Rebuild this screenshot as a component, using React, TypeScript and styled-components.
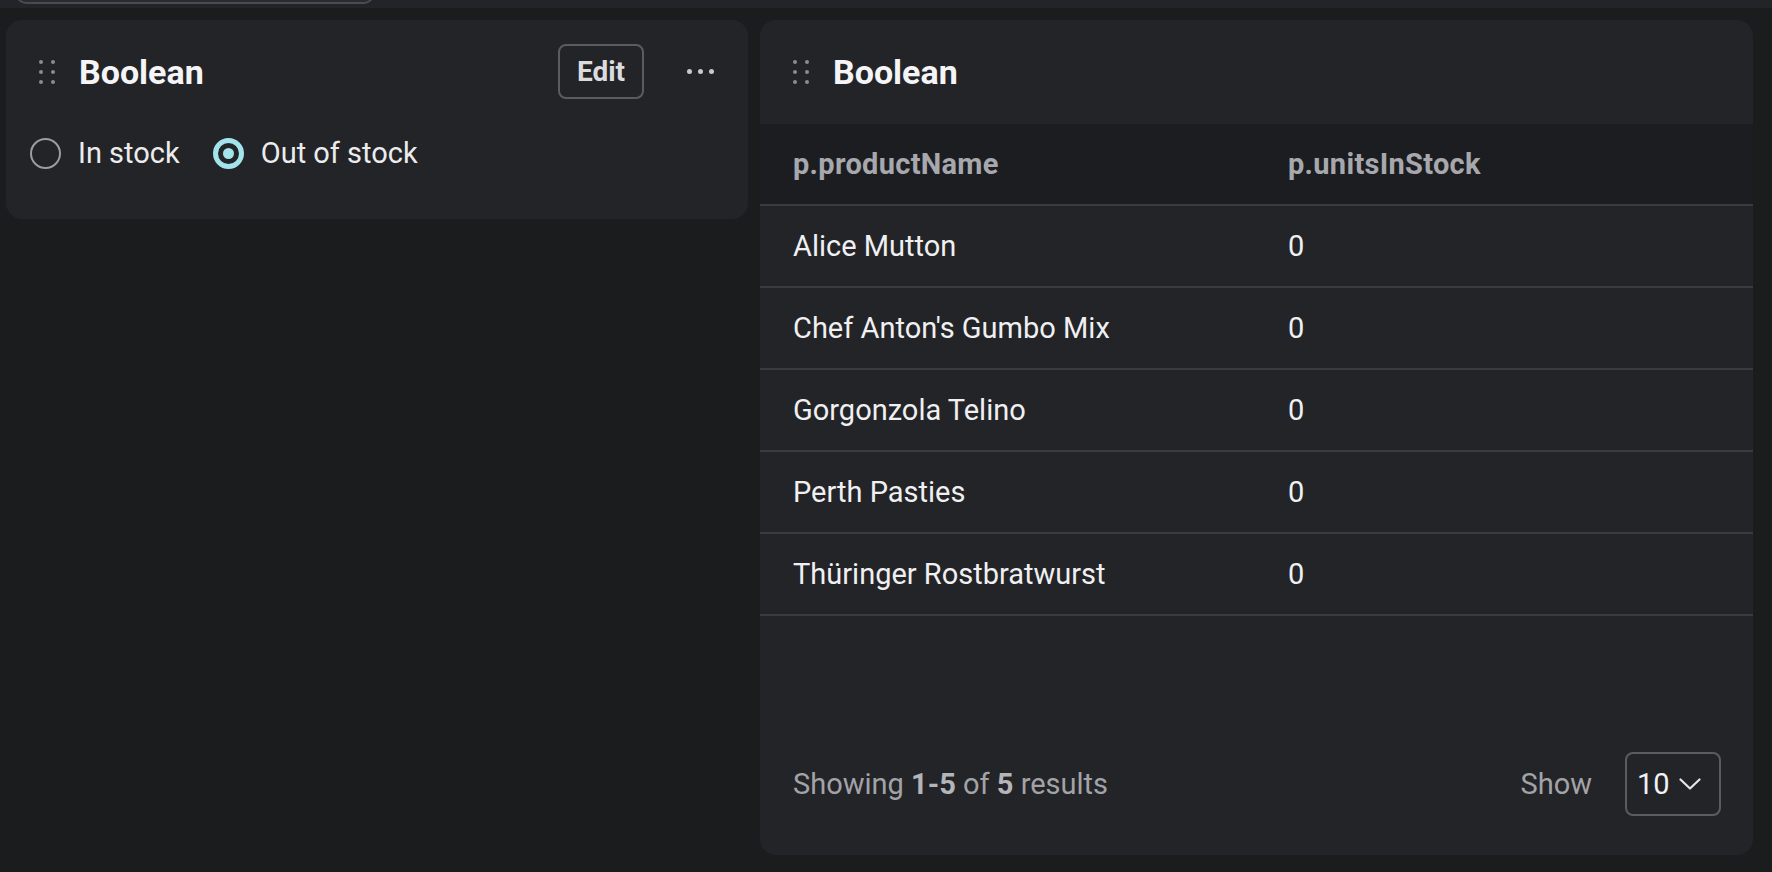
import { FC } from 'react'
import styled, { createGlobalStyle } from 'styled-components'

const GlobalStyle = createGlobalStyle`
    html, body {
        margin: 0;
        padding: 0;
        background: #1b1c1e;
        font-family: Roboto, "Liberation Sans", sans-serif;
        color: #f2f2f4;
    }
    * { box-sizing: border-box; }
`;

const Page = styled.div`
    height: 100vh;
    display: flex;
    flex-direction: column;
`;

const TopBar = styled.div`
    height: 8px;
    flex-shrink: 0;
    background: #232427;
    display: flex;
    align-items: flex-end;
    overflow: hidden;
    padding: 0 0 4px 16px;
`;

const SearchStub = styled.div`
    width: 358px;
    height: 40px;
    flex-shrink: 0;
    background: #2a2b2f;
    border: 2px solid #4a4b50;
    border-radius: 0 0 10px 10px;
`;

const Board = styled.div`
    flex: 1;
    display: grid;
    grid-template-columns: 742px 1fr;
    gap: 12px;
    padding: 12px 19px 17px 6px;
    min-height: 0;
`;

const Card = styled.section<{ $fill?: boolean }>`
    background: #232427;
    border-radius: 16px;
    overflow: hidden;
    align-self: ${p => p.$fill ? 'stretch' : 'start'};
    display: flex;
    flex-direction: column;
`;

const CardHeader = styled.div<{ $tall?: boolean }>`
    display: flex;
    align-items: center;
    height: ${p => p.$tall ? '104px' : '79px'};
    padding: ${p => p.$tall ? '0 32px 0 33px' : '24px 34px 0 33px'};
`;

const Handle = styled.div`
    display: grid;
    grid-template-columns: repeat(2, 4px);
    grid-template-rows: repeat(3, 4px);
    column-gap: 8px;
    row-gap: 6px;
    margin-right: 24px;

    span {
        display: block;
        width: 4px;
        height: 4px;
        border-radius: 50%;
        background: #8b8c91;
    }
`;

const Title = styled.h2`
    margin: 0;
    font-size: 34px;
    font-weight: 700;
    color: #f5f5f7;
    flex: 1;
`;

const EditButton = styled.button`
    height: 55px;
    width: 86px;
    background: transparent;
    border: 2px solid #5b5c61;
    border-radius: 8px;
    color: #dcdcdf;
    font-family: inherit;
    font-size: 28px;
    font-weight: 700;
    padding: 0;
    margin-right: 43px;
`;

const MoreButton = styled.button`
    display: flex;
    gap: 6px;
    background: transparent;
    border: none;
    padding: 0;

    span {
        width: 5px;
        height: 5px;
        border-radius: 50%;
        background: #c9c9cd;
    }
`;

const RadioGroup = styled.div`
    display: flex;
    align-items: center;
    gap: 33px;
    padding: 37px 24px 49px;
`;

const RadioItem = styled.label`
    display: flex;
    align-items: center;
    gap: 17px;
    font-size: 29px;
    color: #ececee;
`;

const RadioDot = styled.span<{ $checked?: boolean }>`
    width: 31px;
    height: 31px;
    border-radius: 50%;
    display: flex;
    align-items: center;
    justify-content: center;
    border: ${p => p.$checked ? '5px solid #a3e3ec' : '2px solid #9c9da2'};

    &::after {
        content: '';
        display: ${p => p.$checked ? 'block' : 'none'};
        width: 11px;
        height: 11px;
        border-radius: 50%;
        background: #a3e3ec;
    }
`;

const Table = styled.div`
    display: flex;
    flex-direction: column;
`;

const Row = styled.div<{ $head?: boolean }>`
    display: grid;
    grid-template-columns: 495px 1fr;
    align-items: center;
    height: 82px;
    padding-left: 33px;
    background: ${p => p.$head ? '#1c1d20' : 'transparent'};
    border-bottom: 2px solid #3a3b40;
    font-size: 29px;
    font-weight: ${p => p.$head ? 700 : 400};
    letter-spacing: ${p => p.$head ? '0.3px' : '0'};
    color: ${p => p.$head ? '#a7a8ae' : '#f0f0f2'};
`;

const Cell = styled.div`
    padding-right: 16px;
`;

const Spacer = styled.div`
    flex: 1;
`;

const Footer = styled.div`
    display: flex;
    align-items: center;
    padding: 0 32px 39px 33px;
    font-size: 29px;
    color: #a2a3a8;

    b {
        font-weight: 700;
        color: #b4b5ba;
    }
`;

const Summary = styled.div`
    flex: 1;
`;

const ShowLabel = styled.span`
    margin-right: 33px;
`;

const PageSize = styled.div`
    width: 96px;
    height: 64px;
    border: 2px solid #5b5c61;
    border-radius: 8px;
    display: flex;
    align-items: center;
    justify-content: space-between;
    padding: 0 18px 0 10px;
    color: #f2f2f4;
`;

const products = [
    'Alice Mutton',
    "Chef Anton's Gumbo Mix",
    'Gorgonzola Telino',
    'Perth Pasties',
    'Thüringer Rostbratwurst',
];

const DragHandle: FC = () => (
    <Handle>
        {[0, 1, 2, 3, 4, 5].map(i => <span key={i} />)}
    </Handle>
);

const App: FC = () => {
    return (
        <Page>
            <GlobalStyle />
            <TopBar>
                <SearchStub />
            </TopBar>
            <Board>
                <Card>
                    <CardHeader>
                        <DragHandle />
                        <Title>Boolean</Title>
                        <EditButton>Edit</EditButton>
                        <MoreButton><span /><span /><span /></MoreButton>
                    </CardHeader>
                    <RadioGroup>
                        <RadioItem><RadioDot />In stock</RadioItem>
                        <RadioItem><RadioDot $checked />Out of stock</RadioItem>
                    </RadioGroup>
                </Card>
                <Card $fill>
                    <CardHeader $tall>
                        <DragHandle />
                        <Title>Boolean</Title>
                    </CardHeader>
                    <Table>
                        <Row $head>
                            <Cell>p.productName</Cell>
                            <Cell>p.unitsInStock</Cell>
                        </Row>
                        {products.map((name, index) =>
                            <Row key={index}>
                                <Cell>{name}</Cell>
                                <Cell>0</Cell>
                            </Row>
                        )}
                    </Table>
                    <Spacer />
                    <Footer>
                        <Summary>Showing <b>1-5</b> of <b>5</b> results</Summary>
                        <ShowLabel>Show</ShowLabel>
                        <PageSize>
                            10
                            <svg width="22" height="12" viewBox="0 0 22 12" fill="none">
                                <path d="M1.5 1.5 L11 10.5 L20.5 1.5" stroke="#e6e6e9" strokeWidth="2.2" strokeLinecap="round" strokeLinejoin="round" />
                            </svg>
                        </PageSize>
                    </Footer>
                </Card>
            </Board>
        </Page>
    )
}

export default App;
